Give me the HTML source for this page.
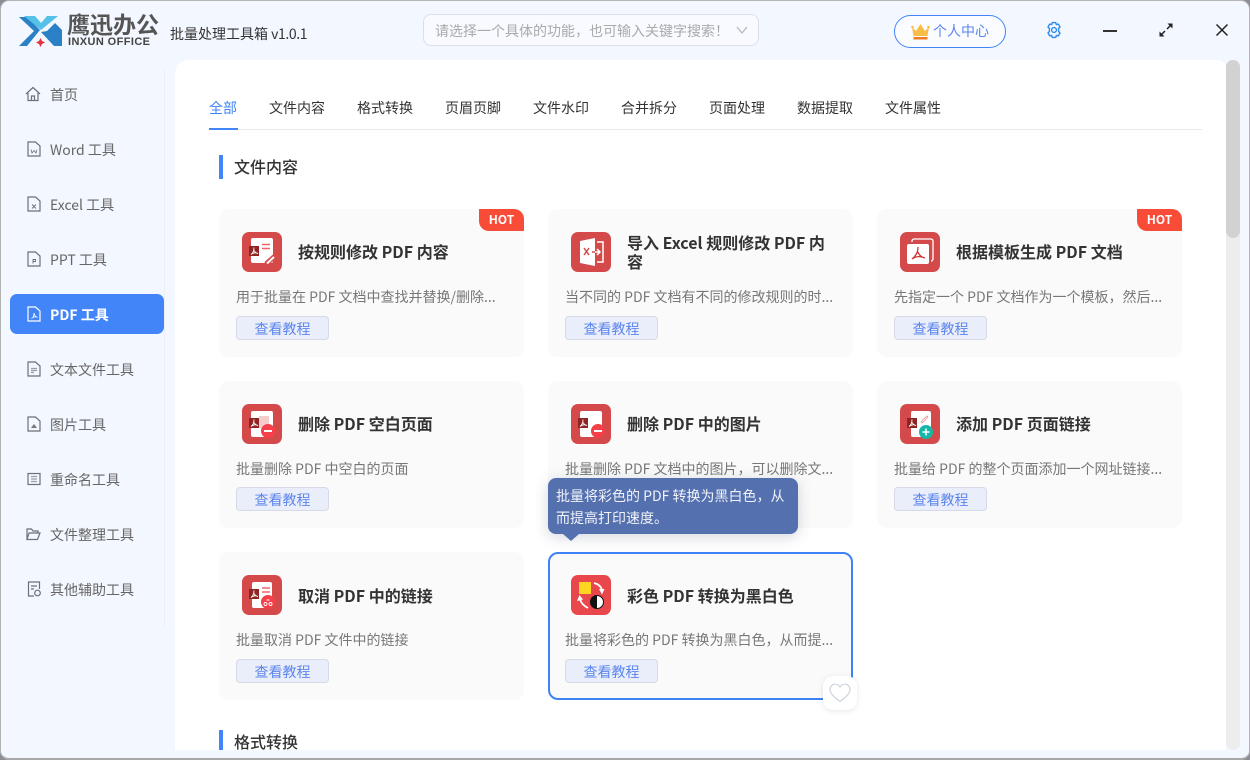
<!DOCTYPE html>
<html lang="zh"><head><meta charset="utf-8"><title>批量处理工具箱</title>
<style>
*{box-sizing:border-box;margin:0;padding:0}
html,body{width:1250px;height:760px;overflow:hidden;background:#8a8d94}
body{font-family:"Noto Sans CJK SC","Liberation Sans",sans-serif;font-size:14px;position:relative}
.abs,.card,.nav,.tab,.card>*{position:absolute}
#win{position:absolute;left:0;top:0;width:1250px;height:760px;background:#f3f7ff;border:1px solid #b4b4b4;border-bottom:2px solid #a8a8a8;border-radius:9px;overflow:hidden}
.t{position:absolute;white-space:nowrap;line-height:20px}
.nav{left:9px;width:154px;height:40px;border-radius:7px;color:#666;line-height:42px;padding-left:40px;white-space:nowrap}
.nav svg{position:absolute;left:16px;top:12px;width:16px;height:16px;fill:none;stroke:#6c7078;stroke-width:1.2}
.nav.on{background:#4285f8;color:#fff;font-weight:700}
.nav.on svg{stroke:#fff}
.tab{top:97px;line-height:20px;color:#333;white-space:nowrap}
.sec{position:absolute;left:219px;width:4px;background:#4285f8}
.st{position:absolute;left:234px;font-size:16px;font-weight:500;line-height:24px;color:#333}
.card{width:305px;height:148px;background:#fafafa;border-radius:10px}
.ic{left:23px;top:23px;width:40px;height:40px;border-radius:7px;background:#d44a4a}
.ti{left:79px;top:20px;width:212px;height:44px;display:flex;align-items:center;font-size:16px;font-weight:700;line-height:19px;color:#333}
.de{left:17px;top:78px;width:280px;line-height:20px;color:#777;white-space:nowrap}
.bt{left:17px;top:107px;width:93px;height:24px;background:#eaeefb;border:1px solid #d6dae6;border-radius:4px;color:#5b85ee;text-align:center;line-height:24px}
.hot{right:0;top:0;width:45px;height:22px;background:#f84c38;color:#fff;font-size:12px;font-weight:700;text-align:center;line-height:22px;border-radius:0 10px 0 10px}
</style></head><body>
<div id="win">
<!-- header -->
<svg class="abs" style="left:17px;top:13px" width="46" height="34" viewBox="0 0 46 34">
<path d="M1 32L16 17L1 3H9L22 16L9 32Z" fill="#2b81c5"/>
<path d="M44 32L29 17L37 9L44 16ZM44 32H36L23 18L29 17Z" fill="#2b81c5"/>
<path d="M6 2H17L23 9L29 2H40L23 16Z" fill="#55c1e8"/>
<path d="M22.500 24L24 27L27 28.500L24 30L22.500 33L21 30L18 28.500L21 27Z" fill="#e8303a"/>
</svg>
<div class="t" style="left:66px;top:6px;font-size:23px;font-weight:700;line-height:32px;color:#555">鹰迅办公</div>
<div class="t" style="left:67px;top:34px;font-family:'Liberation Sans',sans-serif;font-size:11px;font-weight:700;line-height:14px;color:#444;letter-spacing:.4px">INXUN OFFICE</div>
<div class="t" style="left:169px;top:23px;color:#333">批量处理工具箱 <span style="letter-spacing:-.4px">v1.0.1</span></div>
<div class="abs" style="left:422px;top:13px;width:336px;height:32px;border:1px solid #dcdfe6;border-radius:8px;background:#f8faff"></div>
<div class="t" style="left:434px;top:20px;color:#aaa">请选择一个具体的功能，也可输入关键字搜索！</div>
<svg class="abs" style="left:735px;top:24px" width="12" height="10" viewBox="0 0 12 10"><path d="M1 2L6 8L11 2" fill="none" stroke="#b0b4bb" stroke-width="1.2"/></svg>
<div class="abs" style="left:893px;top:14px;width:112px;height:33px;border:1px solid #4285f8;border-radius:17px;background:#fbfcff"></div>
<svg class="abs" style="left:910px;top:22px" width="19" height="18" viewBox="0 0 19 18"><path d="M1 4L5 8L9.500 1L14 8L18 4L16.500 13H2.500Z" fill="#f8bd45"/><circle cx="1.500" cy="4" r="1.300" fill="#f8bd45"/><circle cx="17.500" cy="4" r="1.300" fill="#f8bd45"/><rect x="2.500" y="14" width="14" height="2.500" fill="#f27a22"/></svg>
<div class="t" style="left:932px;top:20px;color:#5b85ee">个人中心</div>
<svg class="abs" style="left:1044px;top:20px" width="18" height="18" viewBox="0 0 18 18" fill="none" stroke="#2e8cf0" stroke-width="1.400"><path d="M7.300 1.600H10.700L11.300 3.600L13.300 3.100L15 6L13.600 7.500V10.500L15 12L13.300 14.900L11.300 14.400L10.700 16.400H7.300L6.700 14.400L4.700 14.900L3 12L4.400 10.500V7.500L3 6L4.700 3.100L6.700 3.600Z" stroke-linejoin="round"/><circle cx="9" cy="9" r="2.400"/></svg>
<div class="abs" style="left:1102px;top:28.500px;width:14px;height:2px;background:#333"></div>
<svg class="abs" style="left:1158px;top:22px" width="14" height="14" viewBox="0 0 14 14"><path d="M8 6L11.500 2.500M6 8L2.500 11.500" stroke="#222" stroke-width="1.500"/><path d="M8.500 .5H13.500V5.500ZM.5 8.500V13.500H5.500Z" fill="#222"/></svg>
<svg class="abs" style="left:1214px;top:22px" width="14" height="14" viewBox="0 0 14 14"><path d="M1.500 1.500L12.500 12.500M12.500 1.500L1.500 12.500" stroke="#222" stroke-width="1.500"/></svg>

<!-- sidebar -->
<div class="abs" style="left:163px;top:69px;width:1px;height:556px;background:#eceef3"></div>
<div class="nav" style="top:73px"><svg style="left:15px" viewBox="0 0 16 16"><path d="M1 8L8 1.500L15 8M3 7V14.500H13V7M6.500 14.500V10H9.500V14.500"/></svg>首页</div>
<div class="nav" style="top:128px"><svg viewBox="0 0 16 16"><path d="M2 1H9.500L14 5V15H2Z"/><path d="M5 8.500L6 12L8 9.500L10 12L11 8.500" stroke-width=".8"/></svg>Word 工具</div>
<div class="nav" style="top:183px"><svg viewBox="0 0 16 16"><path d="M2 1H9.500L14 5V15H2Z"/><path d="M6 8.500L10 12.500M10 8.500L6 12.500" stroke-width=".9"/></svg>Excel 工具</div>
<div class="nav" style="top:238px"><svg viewBox="0 0 16 16"><path d="M2 1H9.500L14 5V15H2Z"/><path d="M7 12.500V8.500H9.500V10.500H7" stroke-width=".9"/></svg>PPT 工具</div>
<div class="nav on" style="top:293px"><svg viewBox="0 0 16 16"><path d="M2 1H9.500L14 5V15H2Z"/><path d="M8 7C8 10 7 12 5.500 12.500C7 11 10 10.500 11 11C9.500 11.500 8.500 9 8 7Z" stroke-width=".8"/></svg>PDF 工具</div>
<div class="nav" style="top:348px"><svg viewBox="0 0 16 16"><path d="M2 1H9.500L14 5V15H2Z"/><path d="M5 7.500H11M5 9.500H11M5 11.500H8" stroke="#9a9da3"/></svg>文本文件工具</div>
<div class="nav" style="top:403px"><svg viewBox="0 0 16 16"><path d="M2 1H9.500L14 5V15H2Z"/><path d="M5 12L8 8L11 12Z" fill="#777" stroke="none"/></svg>图片工具</div>
<div class="nav" style="top:458px"><svg viewBox="0 0 16 16"><rect x="2" y="2.500" width="12" height="11"/><path d="M5 5.500H11M5 8H11M5 10.500H11" stroke="#9a9da3"/></svg>重命名工具</div>
<div class="nav" style="top:513px"><svg style="left:15px" viewBox="0 0 16 16"><path d="M2 13.500V3H6.500L8 5H13V7M2 13.500L4 7H15L12.500 13.500Z"/></svg>文件整理工具</div>
<div class="nav" style="top:568px"><svg viewBox="0 0 16 16"><path d="M8 15H2.500V1H13.500V8"/><path d="M5 5H11M5 8H8" /><circle cx="11.500" cy="12" r="2.800"/></svg>其他辅助工具</div>

<!-- scrollbar -->
<div class="abs" style="left:1225px;top:59px;width:14px;height:690px;background:#ededed;border-radius:7px"></div>
<div class="abs" style="left:1225px;top:59px;width:14px;height:178px;background:#d2d2d2;border-radius:7px"></div>

<!-- content -->
<div class="abs" style="left:174px;top:59px;width:1051px;height:690px;background:#fff;border-radius:14px 8px 0 0;overflow:hidden">
<div class="abs" style="left:35px;top:69px;width:992px;height:1px;background:#e9e9e9"></div>
<div class="abs" style="left:34px;top:68px;width:29px;height:2px;background:#4285f8"></div>
</div>
<div class="tab" style="left:208px;color:#4285f8">全部</div>
<div class="tab" style="left:268px">文件内容</div>
<div class="tab" style="left:356px">格式转换</div>
<div class="tab" style="left:444px">页眉页脚</div>
<div class="tab" style="left:532px">文件水印</div>
<div class="tab" style="left:620px">合并拆分</div>
<div class="tab" style="left:708px">页面处理</div>
<div class="tab" style="left:796px">数据提取</div>
<div class="tab" style="left:884px">文件属性</div>

<div class="sec" style="left:218px;top:154px;height:24px"></div>
<div class="st" style="left:233px;top:153px">文件内容</div>

<!-- Row 1 -->
<div class="card" style="left:218px;top:208px">
<div class="ic"><svg width="40" height="40" viewBox="0 0 40 40"><rect x="9" y="6" width="22" height="25" rx="2" fill="#fff"/><rect x="7" y="14" width="10" height="10" fill="#8e2424"/><path d="M12 15.500C12 19 11 21 9 22.500M12 18.500C13 20 14 21.500 16 21.500M9 22.500C11 20.500 14 20.500 16 21.500" fill="none" stroke="#fff" stroke-width=".9"/><path d="M20 12.500H28M20 16.500H28" stroke="#e66" stroke-width="1.500"/><path d="M24 32L33 24" stroke="#d44a4a" stroke-width="5"/><path d="M25 31.500L32 25" stroke="#fff" stroke-width="2"/></svg></div>
<div class="ti">按规则修改 PDF 内容</div><div class="de">用于批量在 PDF 文档中查找并替换/删除...</div><div class="bt">查看教程</div><div class="hot">HOT</div></div>

<div class="card" style="left:547px;top:208px">
<div class="ic"><svg width="40" height="40" viewBox="0 0 40 40"><path d="M9 9L24 6V34L9 31Z" fill="#fff"/><path d="M26 10H32V30H26" fill="none" stroke="#fff" stroke-width="1.500"/><path d="M13 16L18 23M18 16L13 23" stroke="#d44a4a" stroke-width="1.500"/><path d="M21 20H24" stroke="#d44a4a" stroke-width="1.500"/><path d="M24 20H29M26 17L29 20L26 23" fill="none" stroke="#fff" stroke-width="1.500"/></svg></div>
<div class="ti" style="top:21px">导入 Excel 规则修改 PDF 内容</div><div class="de">当不同的 PDF 文档有不同的修改规则的时...</div><div class="bt">查看教程</div></div>

<div class="card" style="left:876px;top:208px">
<div class="ic"><svg width="40" height="40" viewBox="0 0 40 40"><path d="M12 10V9C12 8 13 7 14 7H31C32 7 33 8 33 9V27C33 28 32 29 31 29" fill="none" stroke="#fff" stroke-width="1.300"/><rect x="7" y="12" width="22" height="20" rx="2" fill="#fff"/><path d="M18 15C18 20 16 24 12 27M18 20C19 23 21 25 25 26M12 27C16 24 21 24 25 26" fill="none" stroke="#c33" stroke-width="1.300"/></svg></div>
<div class="ti">根据模板生成 PDF 文档</div><div class="de">先指定一个 PDF 文档作为一个模板，然后...</div><div class="bt">查看教程</div><div class="hot">HOT</div></div>

<!-- Row 2 -->
<div class="card" style="left:218px;top:380px;height:147px">
<div class="ic"><svg width="40" height="40" viewBox="0 0 40 40"><rect x="9" y="7" width="22" height="26" rx="2" fill="#fff"/><rect x="17" y="12" width="10" height="12" fill="#f5cccc"/><rect x="7" y="14" width="10" height="10" fill="#8e2424"/><path d="M12 15.500C12 19 11 21 9 22.500M12 18.500C13 20 14 21.500 16 21.500M9 22.500C11 20.500 14 20.500 16 21.500" fill="none" stroke="#fff" stroke-width=".9"/><circle cx="26" cy="27" r="7" fill="#f5404a"/><rect x="22" y="26" width="8" height="2" fill="#fff"/></svg></div>
<div class="ti">删除 PDF 空白页面</div><div class="de">批量删除 PDF 中空白的页面</div><div class="bt" style="top:106px">查看教程</div></div>

<div class="card" style="left:547px;top:380px;height:147px">
<div class="ic"><svg width="40" height="40" viewBox="0 0 40 40"><rect x="9" y="7" width="22" height="26" rx="2" fill="#fff"/><rect x="7" y="14" width="10" height="10" fill="#8e2424"/><path d="M12 15.500C12 19 11 21 9 22.500M12 18.500C13 20 14 21.500 16 21.500M9 22.500C11 20.500 14 20.500 16 21.500" fill="none" stroke="#fff" stroke-width=".9"/><circle cx="27" cy="27" r="7" fill="#f5404a"/><rect x="23" y="26" width="8" height="2" fill="#fff"/></svg></div>
<div class="ti">删除 PDF 中的图片</div><div class="de">批量删除 PDF 文档中的图片，可以删除文...</div></div>

<div class="card" style="left:876px;top:380px;height:147px">
<div class="ic"><svg width="40" height="40" viewBox="0 0 40 40"><rect x="11" y="7" width="20" height="26" rx="2" fill="#fff"/><rect x="7" y="14" width="10" height="10" fill="#8e2424"/><path d="M12 15.500C12 19 11 21 9 22.500M12 18.500C13 20 14 21.500 16 21.500M9 22.500C11 20.500 14 20.500 16 21.500" fill="none" stroke="#fff" stroke-width=".9"/><path d="M22 18L27 13" stroke="#e88" stroke-width="2.500" stroke-linecap="round"/><path d="M22 18L27 13" stroke="#fff" stroke-width=".9" stroke-linecap="round"/><circle cx="26" cy="28" r="7" fill="#14b8a6"/><path d="M22.500 28H29.500M26 24.500V31.500" stroke="#fff" stroke-width="1.600"/></svg></div>
<div class="ti">添加 PDF 页面链接</div><div class="de">批量给 PDF 的整个页面添加一个网址链接...</div><div class="bt" style="top:106px">查看教程</div></div>

<!-- Row 3 -->
<div class="card" style="left:218px;top:551px">
<div class="ic"><svg width="40" height="40" viewBox="0 0 40 40"><rect x="10" y="7" width="20" height="26" rx="2" fill="#fff"/><rect x="7" y="14" width="10" height="10" fill="#8e2424"/><path d="M12 15.500C12 19 11 21 9 22.500M12 18.500C13 20 14 21.500 16 21.500M9 22.500C11 20.500 14 20.500 16 21.500" fill="none" stroke="#fff" stroke-width=".9"/><path d="M20 13H28M20 17H28" stroke="#e66" stroke-width="1.500"/><circle cx="26" cy="27" r="7" fill="#f5404a"/><path d="M22 29A1.500 1.500 0 1 0 25 29A1.500 1.500 0 1 0 22 29M27 29A1.500 1.500 0 1 0 30 29A1.500 1.500 0 1 0 27 29M24.500 25H27.500" fill="none" stroke="#fff" stroke-width=".9"/></svg></div>
<div class="ti" style="top:21px">取消 PDF 中的链接</div><div class="de">批量取消 PDF 文件中的链接</div><div class="bt">查看教程</div></div>

<div class="card" style="left:547px;top:551px;border:2px solid #3f82f5">
<div class="ic" style="left:21px;top:21px;background:#e8474c"><svg width="40" height="40" viewBox="0 0 40 40"><rect x="8" y="7" width="12" height="12" fill="#fdd41f"/><path d="M23 8C27 9 30 11 31 15M9 24C10 28 13 31 17 33" fill="none" stroke="#fff" stroke-width="1.800"/><path d="M28 14H33.500L31 19.500ZM6 26L12 24.500L8.500 20Z" fill="#fff"/><circle cx="26" cy="27" r="6.500" fill="#fff"/><circle cx="26" cy="27" r="6.500" fill="none" stroke="#111" stroke-width="1"/><path d="M26 20.500A6.500 6.500 0 0 0 26 33.500Z" fill="#111"/></svg></div>
<div class="ti" style="left:77px;top:19px">彩色 PDF 转换为黑白色</div><div class="de" style="left:15px;top:76px">批量将彩色的 PDF 转换为黑白色，从而提...</div><div class="bt" style="left:15px;top:105px">查看教程</div></div>

<!-- Tooltip -->
<div class="abs" style="left:547px;top:477px;width:250px;height:56px;background:#5470ae;border-radius:8px;box-shadow:0 3px 14px rgba(60,70,100,.22)"></div>
<div class="abs" style="left:562px;top:533px;width:0;height:0;border-left:8px solid transparent;border-right:8px solid transparent;border-top:7px solid #5470ae"></div>
<div class="t" style="left:555px;top:485px;color:#f1f3f9">批量将彩色的 PDF 转换为黑白色，从</div>
<div class="t" style="left:555px;top:507px;color:#f1f3f9">而提高打印速度。</div>

<!-- Heart -->
<div class="abs" style="left:822px;top:675px;width:34px;height:34px;background:#fff;border-radius:10px;box-shadow:0 1px 6px rgba(0,0,0,.10)"></div>
<svg class="abs" style="left:828px;top:682px" width="22" height="20" viewBox="0 0 22 20"><path d="M11 18.500C5 14 1 10.500 1 6.500C1 3.500 3.300 1.200 6 1.200C8 1.200 10 2.300 11 4C12 2.300 14 1.200 16 1.200C18.700 1.200 21 3.500 21 6.500C21 10.500 17 14 11 18.500Z" fill="none" stroke="#cdd5de" stroke-width="1.200"/></svg>

<!-- Bottom section -->
<div class="abs" style="left:174px;top:700px;width:1051px;height:49px;overflow:hidden">
<div class="sec" style="left:44px;top:29px;height:24px"></div>
<div class="st" style="left:59px;top:28px">格式转换</div>
</div>
</div>
</body></html>
